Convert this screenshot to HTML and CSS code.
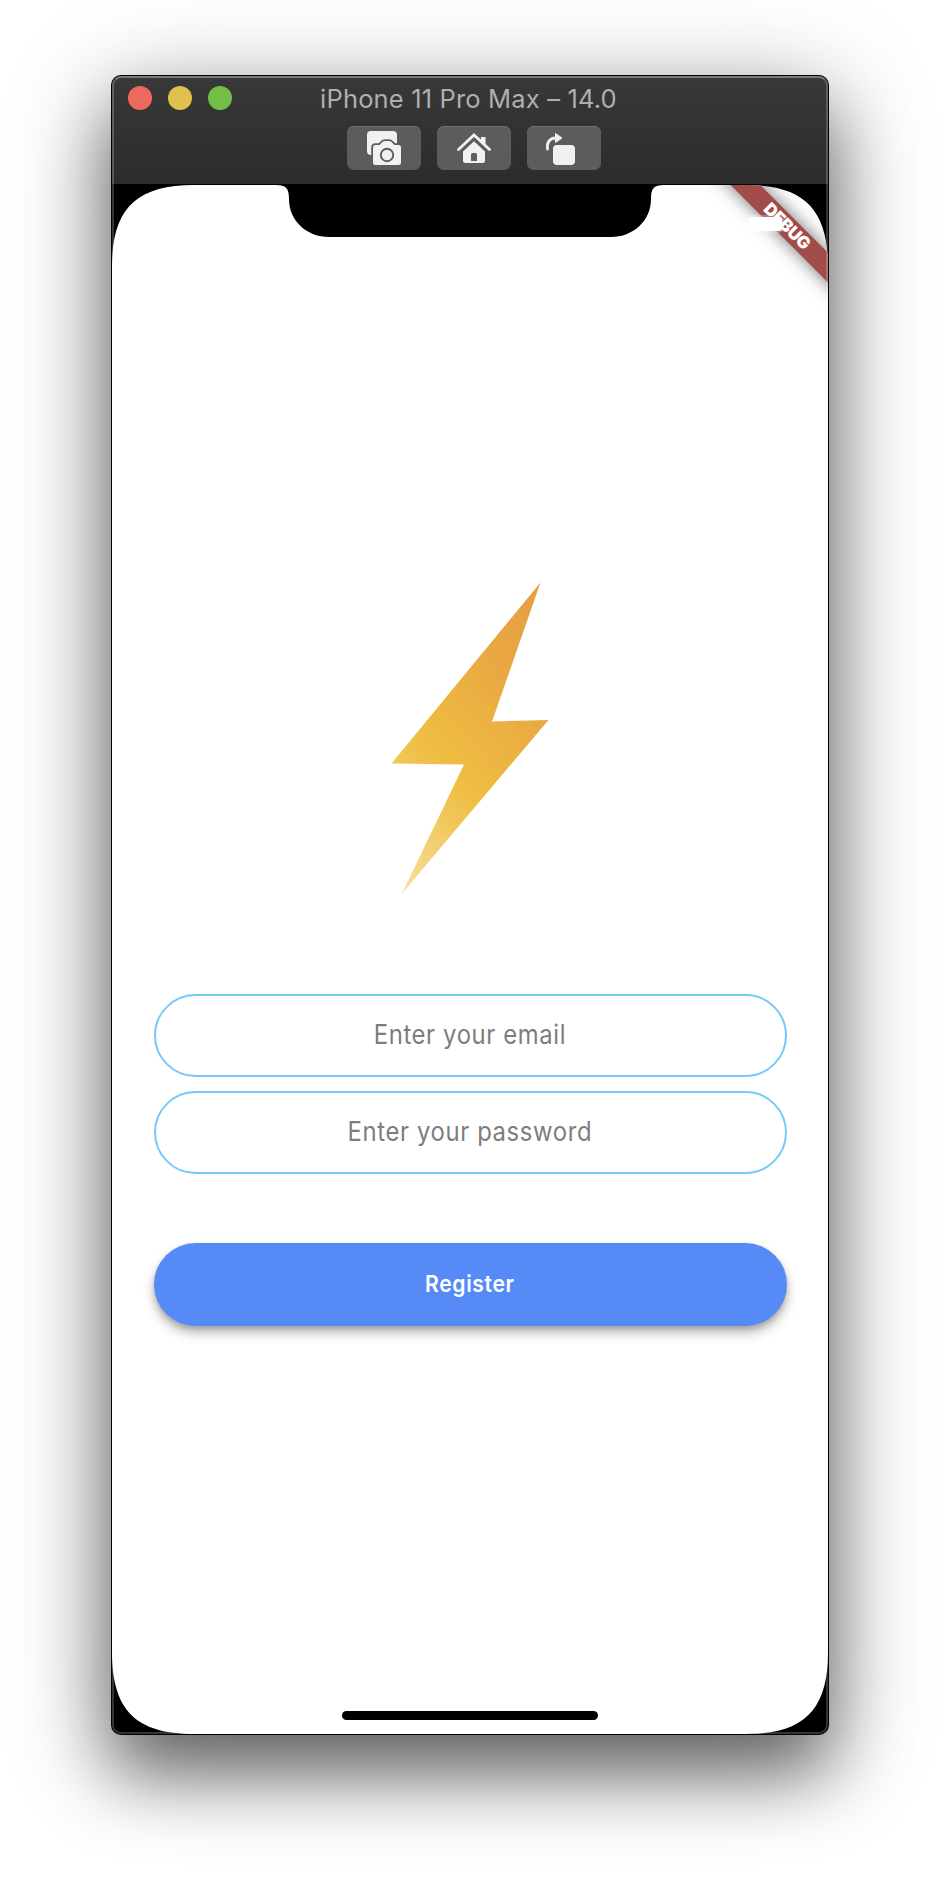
FILE: index.html
```html
<!DOCTYPE html>
<html lang="en">
<head>
<meta charset="utf-8">
<title>iPhone 11 Pro Max – 14.0</title>
<link rel="stylesheet" href="styles.css">
</head>
<body>
<main class="window">
  <header class="titlebar">
    <div class="title-row">
      <div class="lights"><i class="light red"></i><i class="light yellow"></i><i class="light green"></i></div>
      <h1 class="title"><span>iPhone 11 Pro Max – 14.0</span></h1>
    </div>
    <div class="tools">
      <button class="tool" aria-label="Screenshot">
        <svg width="74" height="44" viewBox="0 0 74 44">
          <rect x="20" y="5" width="30" height="24" rx="4" fill="#f1f1f1"/>
          <path fill="#f1f1f1" stroke="#5c5c5c" stroke-width="3.600" paint-order="stroke" d="M28.500 19H32C34 19 34.500 15 38 15H42C45.500 15 46 19 48 19H51.500Q54 19 54 21.500V36.500Q54 39 51.500 39H28.500Q26 39 26 36.500V21.500Q26 19 28.500 19Z"/>
          <circle cx="40" cy="29" r="6.200" fill="none" stroke="#5c5c5c" stroke-width="1.900"/>
        </svg>
      </button>
      <button class="tool" aria-label="Home">
        <svg width="74" height="44" viewBox="0 0 74 44">
          <path fill="#f1f1f1" d="M37 12.500 48 23V34.500Q48 37 45.500 37H28.500Q26 37 26 34.500V23Z"/>
          <path fill="none" stroke="#5c5c5c" stroke-width="5.500" d="M22 25.500 37 11.500 52 25.500"/>
          <path fill="none" stroke="#f1f1f1" stroke-width="2.800" stroke-linecap="round" d="M21.500 23.500 37 9 52.500 23.500"/>
          <path fill="#f1f1f1" d="M44 11H48.500V19L44 15Z"/>
          <path fill="#5c5c5c" d="M34 28.500a1.500 1.500 0 0 1 1.500-1.500h3a1.500 1.500 0 0 1 1.500 1.500V35H34Z"/>
        </svg>
      </button>
      <button class="tool" aria-label="Rotate">
        <svg width="74" height="44" viewBox="0 0 74 44">
          <rect x="26" y="19" width="22" height="20" rx="4" fill="#f1f1f1"/>
          <path fill="none" stroke="#f1f1f1" stroke-width="2.800" stroke-linecap="round" d="M20.500 23C19.500 16 23 12 29 12"/>
          <path fill="#f1f1f1" stroke="#f1f1f1" stroke-linejoin="round" d="M28.500 7.500 35 12 28.500 16.500Z"/>
        </svg>
      </button>
    </div>
  </header>
  <section class="screen">
    <div class="ribbon"><span>DEBUG</span></div>
    <div class="status"></div>
    <svg class="bolt" width="158" height="312" viewBox="391 582 158 312">
      <defs>
        <linearGradient id="gold" gradientUnits="userSpaceOnUse" x1="402" y1="893" x2="622" y2="694">
          <stop offset="0" stop-color="#f7df9c"/>
          <stop offset=".39" stop-color="#efbe42"/>
          <stop offset=".75" stop-color="#e9a842"/>
          <stop offset="1" stop-color="#e79f41"/>
        </linearGradient>
      </defs>
      <path fill="url(#gold)" d="M540.500 582.500 492 721.500 548.500 720 402 893.500 464 764.500 391.500 763.500Z"/>
    </svg>
    <form class="form">
      <label class="field"><span>Enter your email</span></label>
      <label class="field"><span>Enter your password</span></label>
      <button type="button" class="register"><span>Register</span></button>
    </form>
    <div class="home-bar"></div>
  </section>
</main>
</body>
</html>
```
FILE: styles.css
```css
* { box-sizing: border-box; }

body {
  margin: 0;
  height: 1882px;
  overflow: hidden;
  padding: 75px 111px;
  background: #fff;
  font-family: Inter, "Liberation Sans", sans-serif;
}

.window {
  position: relative;
  width: 718px;
  height: 1660px;
  padding: 1px;
  border-radius: 10px;
  background: #000;
  box-shadow: 0 38px 72px rgba(0, 0, 0, .52), 0 18px 108px rgba(0, 0, 0, .27);
}

/* translucent inner outline of the window */
.window::after {
  content: "";
  position: absolute;
  inset: 1px;
  border: 2px solid rgba(255, 255, 255, .2);
  border-top-color: rgba(255, 255, 255, .34);
  border-radius: 9px;
  pointer-events: none;
}

.titlebar {
  height: 108px;
  border-radius: 9px 9px 0 0;
  background: linear-gradient(#383838, #2c2c2c);
}

.title-row {
  display: grid;
  grid-template-columns: 1fr auto 1fr;
  align-items: center;
  height: 44px;
  padding-left: 16px;
}

.lights { display: flex; gap: 16px; }
.light { width: 24px; height: 24px; border-radius: 50%; }
.red { background: #ed695e; }
.yellow { background: #e0c14c; }
.green { background: #72be47; }

.title {
  margin: 0 19px 0 0;
  padding-top: 2px;
  font-size: 25.500px;
  font-weight: 400;
  line-height: 42px;
  letter-spacing: .16px;
  color: #afafaf;
  white-space: nowrap;
}

.tools {
  display: flex;
  gap: 16px;
  padding: 6px 0 0 235px;
}

.tool {
  width: 74px;
  height: 44px;
  padding: 0;
  border: 0;
  border-radius: 7px;
  background: #5c5c5c;
  box-shadow: inset 0 1px #717171;
}
.tool svg { display: block; }

.screen {
  position: relative;
  display: flex;
  flex-direction: column;
  align-items: center;
  height: 1549px;
  margin-top: 1px;
  padding-top: 397px;
  background: #fff;
  clip-path: path("M0 82C0 24 24 0 82 0H164C174 0 177 3 177 14C177 36 195 52 217 52H499C521 52 539 36 539 14C539 3 542 0 552 0H634C692 0 716 24 716 82V1467C716 1525 692 1549 634 1549H82C24 1549 0 1525 0 1467Z");
}

.ribbon {
  position: absolute;
  left: 575px;
  top: 30.500px;
  width: 200px;
  height: 20.500px;
  transform: rotate(45deg);
  background: #a14c4a;
  box-shadow: 0 0 18px rgba(0, 0, 0, .55);
  color: #fff;
  font-size: 17px;
  font-weight: 900;
  line-height: 20.500px;
  letter-spacing: -.3px;
  text-align: center;
}

.status {
  position: absolute;
  left: 637px;
  top: 32px;
  width: 33px;
  height: 14px;
  border-radius: 3px;
  background: #fff;
  box-shadow: 0 0 0 2px rgba(255, 255, 255, .25);
}

.bolt { display: block; }

.form {
  width: 633px;
  margin-top: 100px;
  display: flex;
  flex-direction: column;
}

.field, .register {
  display: flex;
  align-items: center;
  justify-content: center;
  height: 83px;
  border-radius: 42px;
}

.field {
  margin-bottom: 14px;
  padding-bottom: 3px;
  border: 2px solid #75c9fb;
  font-size: 26.500px;
  letter-spacing: .7px;
  color: #7d7d7d;
  white-space: nowrap;
}
.field span { transform: scaleX(.9); }

.register {
  margin-top: 55px;
  border: 0;
  background: #568bf7;
  box-shadow: 0 7px 12px rgba(0, 0, 0, .28), 0 3px 5px rgba(0, 0, 0, .14);
  padding: 0 0 2px;
  font: 600 23.500px Inter, "Liberation Sans", sans-serif;
  letter-spacing: .7px;
  color: #fff;
}
.register span { transform: scaleX(.9); }

.home-bar {
  width: 256px;
  height: 9px;
  margin: auto 0 14px;
  border-radius: 5px;
  background: #000;
}
```
